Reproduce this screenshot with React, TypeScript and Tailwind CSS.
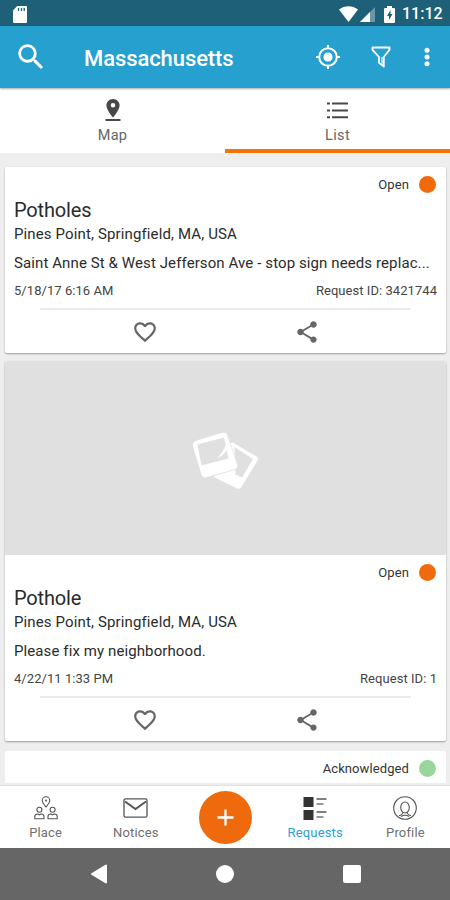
import React from 'react';
import clsx from 'clsx';

interface ServiceRequest {
  id: string;
  title: string;
  location: string;
  description: string;
  date: string;
  status: string;
  hasPlaceholder?: boolean;
}

const requests: ServiceRequest[] = [
  {
    id: '3421744',
    title: 'Potholes',
    location: 'Pines Point, Springfield, MA, USA',
    description: 'Saint Anne St & West Jefferson Ave - stop sign needs replac...',
    date: '5/18/17 6:16 AM',
    status: 'Open',
  },
  {
    id: '1',
    title: 'Pothole',
    location: 'Pines Point, Springfield, MA, USA',
    description: 'Please fix my neighborhood.',
    date: '4/22/11 1:33 PM',
    status: 'Open',
    hasPlaceholder: true,
  },
];

const StatusBar = () => (
  <div className="flex h-[26px] shrink-0 items-center bg-[#1d6078] pt-[2px] text-white">
    <svg className="ml-[13px] h-[17px] w-[14px]" viewBox="0 0 14 17">
      <path d="M4.2 0H13a1 1 0 0 1 1 1v15a1 1 0 0 1-1 1H1a1 1 0 0 1-1-1V4.500z" fill="#fff" />
      <path d="M5.500 2v3M8.500 2v3M11.200 2v3" stroke="#1d6078" strokeWidth="1.300" />
    </svg>
    <svg className="ml-[312px] h-[16px] w-[19px]" viewBox="0 0 19 16">
      <path d="M0 3.500C5.500-1 13.500-1 19 3.500L9.500 16z" fill="#fff" />
    </svg>
    <svg className="ml-[2px] h-[15px] w-[15px]" viewBox="0 0 15 15">
      <path d="M15 0v15H0z" fill="#fff" opacity="0.35" />
      <path d="M10 5v10H0z" fill="#fff" />
    </svg>
    <svg className="ml-[9px] h-[17px] w-[11px]" viewBox="0 0 11 17">
      <path d="M3 0h5v2h2a1 1 0 0 1 1 1v13a1 1 0 0 1-1 1H1a1 1 0 0 1-1-1V3a1 1 0 0 1 1-1h2z" fill="#fff" />
      <path d="M6.500 4 3 10h2v4l3.500-6h-2z" fill="#1d6078" />
    </svg>
    <span className="ml-[7px] whitespace-nowrap text-[16px] leading-[20px] font-medium">11:12</span>
  </div>
);

const AppBar = () => (
  <header className="z-10 flex h-[62px] shrink-0 items-center bg-[#26a0cf] text-white shadow-[0_1px_2px_rgba(0,0,0,0.35)]">
    <svg className="ml-[14px] h-[34px] w-[34px]" viewBox="0 0 24 24" fill="#fff">
      <path d="M15.500 14h-.79l-.28-.27A6.471 6.471 0 0 0 16 9.500 6.500 6.500 0 1 0 9.500 16c1.610 0 3.090-.59 4.230-1.570l.27.28v.79l5 4.990L20.490 19l-4.990-5zm-6 0C7.010 14 5 11.990 5 9.500S7.010 5 9.500 5 14 7.010 14 9.500 11.990 14 9.500 14z" />
    </svg>
    <h1 className="mt-[3px] ml-[36px] w-[231px] whitespace-nowrap text-[22px] leading-[28px] font-medium tracking-[-0.08px]">Massachusetts</h1>
    <svg className="h-[26px] w-[26px]" viewBox="0 0 26 26" fill="none" stroke="#fff" strokeWidth="2">
      <circle cx="13" cy="13" r="8.800" />
      <circle cx="13" cy="13" r="4.600" fill="#fff" stroke="none" />
      <path d="M13 1v4M13 21v4M1 13h4M21 13h4" />
    </svg>
    <svg className="ml-[30px] h-[22px] w-[20px]" viewBox="0 0 20 22" fill="none" stroke="#fff" strokeWidth="1.800" strokeLinejoin="round">
      <path d="M1.500 1.500h17v2.300L12.800 11v9.500L8 16.800V11L1.500 3.800z" />
      <path d="M11 11v7.500" strokeWidth="1.200" />
    </svg>
    <svg className="ml-[32px] h-[20px] w-[8px]" viewBox="0 0 8 20" fill="#fff">
      <circle cx="4" cy="3.200" r="2.500" />
      <circle cx="4" cy="10" r="2.500" />
      <circle cx="4" cy="16.800" r="2.500" />
    </svg>
  </header>
);

const Tabs = () => (
  <div className="flex h-[65px] shrink-0 bg-white text-[14.500px] leading-[18px] text-[#666]">
    <div className="flex flex-1 flex-col items-center pt-[11px]">
      <svg className="h-[23px] w-[16px]" viewBox="0 0 16 23" fill="#484848">
        <path fillRule="evenodd" d="M8 0C4.300 0 1.400 2.900 1.400 6.500 1.400 11.200 8 18.500 8 18.500s6.600-7.300 6.600-12C14.600 2.900 11.700 0 8 0zm0 4a2.300 2.300 0 1 1 0 4.600A2.300 2.300 0 0 1 8 4z" />
        <path d="M.5 20h15v2H.5z" />
      </svg>
      <span className="mt-[5px] tracking-[0.35px]">Map</span>
    </div>
    <div className="flex flex-1 flex-col items-center border-b-[4px] border-[#ef750a] pt-[14px]">
      <svg className="h-[18px] w-[21px]" viewBox="0 0 21 18" fill="#484848">
        <path d="M0 .6h3v2H0zM5 .6h16v2H5zM0 7.500h3v2H0zM5 7.500h16v2H5zM0 14.300h3v2H0zM5 14.300h16v2H5z" />
      </svg>
      <span className="mt-[7px] tracking-[0.35px]">List</span>
    </div>
  </div>
);

const StatusRow = ({ status }: { status: string }) => (
  <div className="flex h-[35px] items-center justify-end pr-[10px] text-[13px] text-[#333]">
    <span className="tracking-[0.1px]">{status}</span>
    <span className={clsx('ml-[10px] h-[17px] w-[17px] rounded-full', status === 'Open' ? 'bg-[#ee6a0c]' : 'bg-[#99d69b]')} />
  </div>
);

const PhotoPlaceholder = () => (
  <div className="flex h-[194px] items-center justify-center bg-[#e0e0e0]">
    <svg className="h-[64px] w-[68px]" viewBox="0 -2 68 64">
      <path fillRule="evenodd" fill="#fff" d="M38 15.500Q40 14 42 15.200L64.500 28.500Q67 30 65.500 32.500L49.500 59Q48 61.500 45 60.500L22 49ZM42.500 19L61 31 50 49.500 43.500 46.500Z" />
      <path fill="#fff" stroke="#e0e0e0" strokeWidth="0.800" d="M3.500 12.500 30 4.500Q34 3.500 35.500 7L45.500 36.500Q46.500 40 43 41.500L15 49.500Q10.500 50.500 9 46.500L.5 18Q0 14 3.500 12.500Z" />
      <path fill="#e0e0e0" d="M5.500 16.500 32 9.500 36.500 30.500 9.500 37.500Z" />
      <path fill="#fff" d="M25 30.500Q30.500 25 34 16.500L35 22Q31 28 25 30.500Z" />
    </svg>
  </div>
);

const RequestCard = ({ request }: { request: ServiceRequest }) => (
  <article className="shrink-0 overflow-hidden rounded-[2px] bg-white shadow-[0_1px_2px_rgba(0,0,0,0.35)]">
    {request.hasPlaceholder && <PhotoPlaceholder />}
    <StatusRow status={request.status} />
    <div className="px-[9px] whitespace-nowrap text-[#2b2b2b]">
      <h2 className="-mt-[4px] text-[20px] leading-[24px] tracking-[-0.15px]">{request.title}</h2>
      <p className="mt-[2px] text-[15px] leading-[20px] tracking-[0.13px]">{request.location}</p>
      <p className="mt-[9px] text-[15px] leading-[20px] tracking-[0.1px]">{request.description}</p>
      <div className="mt-[10px] flex justify-between text-[13px] leading-[16px] text-[#444]">
        <span className="tracking-[0.05px]">{request.date}</span>
        <span className="tracking-[0.05px]">Request ID: {request.id}</span>
      </div>
    </div>
    <div className="mx-[35px] mt-[9px] h-[2px] bg-[#ebebeb]" />
    <div className="flex h-[43px] items-center">
      <svg className="ml-[126.500px] h-[26px] w-[26px]" viewBox="0 0 24 24" fill="#666">
        <path d="M16.500 3c-1.740 0-3.410.81-4.500 2.090C10.910 3.810 9.240 3 7.500 3 4.420 3 2 5.420 2 8.500c0 3.780 3.400 6.860 8.550 11.540L12 21.350l1.450-1.320C18.600 15.360 22 12.280 22 8.500 22 5.420 19.580 3 16.500 3zm-4.400 15.550l-.1.100-.1-.1C7.140 14.240 4 11.390 4 8.500 4 6.500 5.500 5 7.500 5c1.540 0 3.040.99 3.570 2.360h1.870C13.460 5.990 14.960 5 16.500 5c2 0 3.500 1.500 3.500 3.500 0 2.890-3.140 5.740-7.900 10.050z" />
      </svg>
      <svg className="ml-[136px] h-[26px] w-[26px]" viewBox="0 0 24 24" fill="#666">
        <path d="M18 16.080c-.76 0-1.440.3-1.960.77L8.910 12.700c.05-.23.09-.46.09-.7s-.04-.47-.09-.7l7.050-4.110c.54.5 1.250.81 2.040.81 1.660 0 3-1.340 3-3s-1.340-3-3-3-3 1.340-3 3c0 .24.04.47.09.7L8.040 9.810C7.500 9.310 6.790 9 6 9c-1.660 0-3 1.340-3 3s1.340 3 3 3c.79 0 1.500-.31 2.040-.81l7.120 4.160c-.05.21-.08.43-.08.65 0 1.610 1.310 2.920 2.920 2.920s2.920-1.310 2.920-2.920-1.310-2.920-2.920-2.920z" />
      </svg>
    </div>
  </article>
);

const PlaceIcon = () => (
  <svg className="h-[24px] w-[24px]" viewBox="0 0 24 24" fill="none" stroke="#555" strokeWidth="1.100">
    <path d="M12 11C10 8.500 8.200 6.800 8.200 4.600a3.800 3.800 0 0 1 7.600 0C15.800 6.800 14 8.500 12 11z" />
    <circle cx="12" cy="4.600" r="1" fill="#555" stroke="none" />
    <circle cx="5.400" cy="13.800" r="2.500" />
    <circle cx="18.600" cy="13.800" r="2.500" />
    <path d="M.8 22.800v-2.300c0-1.500 1.400-2.500 3-2.500l1.600.8 1.600-.8c1.600 0 3 1 3 2.500v2.300zM14 22.800v-2.300c0-1.500 1.400-2.500 3-2.500l1.600.8 1.600-.8c1.600 0 3 1 3 2.500v2.300z" />
  </svg>
);

const NoticesIcon = () => (
  <svg className="h-[24px] w-[25px]" viewBox="0 0 25 24" fill="none" stroke="#555">
    <rect x="1" y="2.800" width="23" height="18.400" rx="1.500" strokeWidth="1.300" />
    <path d="M2 5.500 12.500 13 23 5.500" strokeWidth="2" />
  </svg>
);

const RequestsIcon = () => (
  <svg className="h-[24px] w-[24px]" viewBox="0 0 24 24" fill="#333">
    <path d="M.5 1h10v10h-10zM.5 14h10v10h-10z" />
    <path d="M13.500 3h10M13.500 16h10" stroke="#555" strokeWidth="1.300" />
    <path d="M13.500 8h7M13.500 21h7" stroke="#777" strokeWidth="1.300" />
  </svg>
);

const ProfileIcon = () => (
  <svg className="h-[24px] w-[24px]" viewBox="0 0 24 24" fill="none" stroke="#555" strokeWidth="1.100">
    <circle cx="12" cy="12" r="11.300" />
    <ellipse cx="12" cy="11.500" rx="4.300" ry="5.500" />
    <path d="M9.800 16.300c0 1.800-.6 2.500-3.800 3.500M14.200 16.300c0 1.800.6 2.500 3.800 3.500M8 20.500c2.500-1.600 5.500-1.600 8 0" />
  </svg>
);

interface NavItemProps {
  label: string;
  active?: boolean;
  children: React.ReactNode;
}

const NavItem: React.FC<NavItemProps> = ({ label, active, children }) => (
  <div className={clsx('flex flex-1 flex-col items-center pt-[10px] pl-px', active ? 'text-[#2b9fd0]' : 'text-[#707070]')}>
    {children}
    <span className="mt-[4px] text-[13px] leading-[18px] tracking-[0.15px]">{label}</span>
  </div>
);

const BottomNav = () => (
  <nav className="z-10 flex h-[62px] shrink-0 bg-white shadow-[0_-1px_1px_rgba(0,0,0,0.06)]">
    <NavItem label="Place"><PlaceIcon /></NavItem>
    <NavItem label="Notices"><NoticesIcon /></NavItem>
    <div className="flex flex-1 items-center justify-center">
      <button className="flex h-[53px] w-[53px] items-center justify-center rounded-full bg-[#ee6a0c]">
        <svg className="h-[17px] w-[17px]" viewBox="0 0 17 17" stroke="#fff" strokeWidth="2.300">
          <path d="M8.500.5v16M.5 8.500h16" />
        </svg>
      </button>
    </div>
    <NavItem label="Requests" active><RequestsIcon /></NavItem>
    <NavItem label="Profile"><ProfileIcon /></NavItem>
  </nav>
);

const SystemNav = () => (
  <div className="flex h-[52px] shrink-0 items-center bg-[#666]">
    <svg className="ml-[90px] h-[20px] w-[18px]" viewBox="0 0 18 20">
      <path d="M16 1.500v17L2 10z" fill="#fff" stroke="#fff" strokeWidth="2" strokeLinejoin="round" />
    </svg>
    <div className="ml-[108px] h-[18px] w-[18px] rounded-full bg-white" />
    <div className="ml-[109px] h-[18px] w-[18px] rounded-[2px] bg-white" />
  </div>
);

export default function App() {
  return (
    <div className="flex h-[900px] w-[450px] flex-col overflow-hidden bg-[#eee] font-['Roboto',sans-serif]">
      <StatusBar />
      <AppBar />
      <Tabs />
      <main className="flex min-h-0 flex-1 flex-col gap-[8px] overflow-hidden pt-[14px] pr-[4px] pb-[3px] pl-[5px]">
        {requests.map((request) => (
          <RequestCard key={request.id} request={request} />
        ))}
        <article className="mt-[2px] min-h-0 flex-1 overflow-hidden rounded-t-[2px] bg-white">
          <StatusRow status="Acknowledged" />
        </article>
      </main>
      <BottomNav />
      <SystemNav />
    </div>
  );
}
